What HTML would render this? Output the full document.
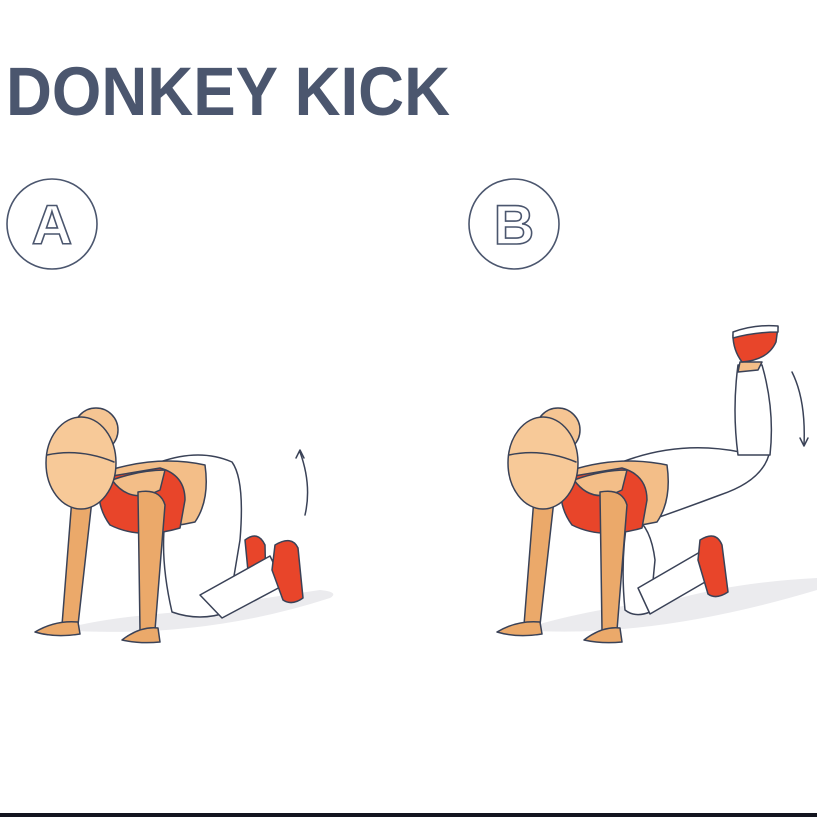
<!DOCTYPE html>
<html><head><style>
html,body{margin:0;padding:0;background:#fff;}
body{width:817px;height:817px;overflow:hidden;position:relative;}
svg{position:absolute;left:0;top:0;}
</style></head><body>
<svg width="817" height="817" viewBox="0 0 817 817" xmlns="http://www.w3.org/2000/svg">
<rect width="817" height="817" fill="#fff"/>
<text x="6" y="115" font-family="Liberation Sans, sans-serif" font-weight="bold" font-size="69" fill="#4b566e" textLength="444" lengthAdjust="spacingAndGlyphs">DONKEY KICK</text>
<circle cx="52" cy="224" r="45" fill="none" stroke="#4b566e" stroke-width="1.6"/>
<text x="52" y="244" text-anchor="middle" font-family="Liberation Sans, sans-serif" font-weight="bold" font-size="56" fill="none" stroke="#4b566e" stroke-width="1.6">A</text>
<circle cx="514" cy="224" r="45" fill="none" stroke="#4b566e" stroke-width="1.6"/>
<text x="514" y="244" text-anchor="middle" font-family="Liberation Sans, sans-serif" font-weight="bold" font-size="56" fill="none" stroke="#4b566e" stroke-width="1.6">B</text>

<g stroke="#3a4257" stroke-width="1.5" stroke-linejoin="round" stroke-linecap="round">
<!-- Figure A -->
<path d="M60 630 Q200 640 330 598 Q340 592 320 590 Q250 600 180 612 Q100 618 60 630Z" fill="#ebebee" stroke="none"/>
<path d="M245 540 Q258 530 265 545 L266 590 L250 592Z" fill="#e8452a"/>
<path d="M160 462 Q200 448 232 462 Q245 480 240 540 L228 612 Q200 622 172 612 Q160 560 165 520Z" fill="#fff"/>
<path d="M200 595 L270 556 L284 585 L222 618Z" fill="#fff"/>
<path d="M275 545 Q292 535 298 548 L303 598 Q292 606 283 600 L272 570Z" fill="#e8452a"/>
<path d="M110 470 Q160 455 205 465 Q210 500 195 522 Q160 530 130 525Z" fill="#f3be88"/>
<path d="M100 478 L160 468 Q185 475 185 500 L180 528 Q140 540 110 525 Q95 505 100 478Z" fill="#e8452a"/>
<path d="M112 480 Q130 505 160 490 L165 470 Q140 470 112 480Z" fill="#f3be88"/>
<path d="M72 498 L92 500 L78 625 L62 625Z" fill="#eba96a"/>
<path d="M35 632 Q55 620 78 622 L80 634 Q55 638 35 632Z" fill="#eba96a"/>
<path d="M138 492 Q160 488 165 505 L155 630 L140 630Z" fill="#eba96a"/>
<path d="M122 640 Q140 626 158 628 L160 642 Q140 644 122 640Z" fill="#eba96a"/>
<circle cx="96" cy="430" r="22" fill="#f5c593"/>
<ellipse cx="81" cy="463" rx="35" ry="46" fill="#f7c998"/>
<path d="M47 455 Q80 448 114 462" fill="none"/>
<path d="M305 515 Q312 485 300 452" fill="none"/>
<path d="M296 458 L300 450 L304 458" fill="none"/>

<!-- Figure B -->
<path d="M520 630 Q650 640 817 590 L817 578 Q740 582 680 598 Q580 610 520 630Z" fill="#ebebee" stroke="none"/>
<path d="M622 462 Q680 440 740 452 L770 450 Q765 480 720 495 Q680 510 645 522 Q625 500 622 462Z" fill="#fff"/>
<path d="M738 365 L762 365 Q775 410 770 455 L738 455 Q732 410 738 365Z" fill="#fff"/>
<path d="M738 372 L758 370 L762 362 L740 362Z" fill="#f3be88"/>
<path d="M733 335 Q760 328 778 327 L776 342 Q768 360 742 362 Q733 350 733 335Z" fill="#e8452a"/>
<path d="M733 332 Q755 324 778 326 L778 332 Q755 332 733 338Z" fill="#fff"/>
<path d="M628 515 Q650 520 655 560 L650 612 Q635 618 625 610 Q620 560 628 515Z" fill="#fff"/>
<path d="M638 588 L700 552 L712 578 L650 614Z" fill="#fff"/>
<path d="M700 540 Q716 530 722 545 L728 592 Q716 600 708 594 L698 560Z" fill="#e8452a"/>
<path d="M572 470 Q620 455 667 465 Q672 500 657 522 Q620 530 592 525Z" fill="#f3be88"/>
<path d="M562 478 L622 468 Q647 475 647 500 L642 528 Q602 540 572 525 Q557 505 562 478Z" fill="#e8452a"/>
<path d="M574 480 Q592 505 622 490 L627 470 Q602 470 574 480Z" fill="#f3be88"/>
<path d="M534 498 L554 500 L540 625 L524 625Z" fill="#eba96a"/>
<path d="M497 632 Q517 620 540 622 L542 634 Q517 638 497 632Z" fill="#eba96a"/>
<path d="M600 492 Q622 488 627 505 L617 630 L602 630Z" fill="#eba96a"/>
<path d="M584 640 Q602 626 620 628 L622 642 Q602 644 584 640Z" fill="#eba96a"/>
<circle cx="558" cy="430" r="22" fill="#f5c593"/>
<ellipse cx="543" cy="463" rx="35" ry="46" fill="#f7c998"/>
<path d="M509 455 Q542 448 576 462" fill="none"/>
<path d="M792 372 Q806 400 804 445" fill="none"/>
<path d="M800 438 L804 446 L808 438" fill="none"/>
</g>
<rect x="0" y="813" width="817" height="4" fill="#13151f"/>
</svg>
</body></html>
